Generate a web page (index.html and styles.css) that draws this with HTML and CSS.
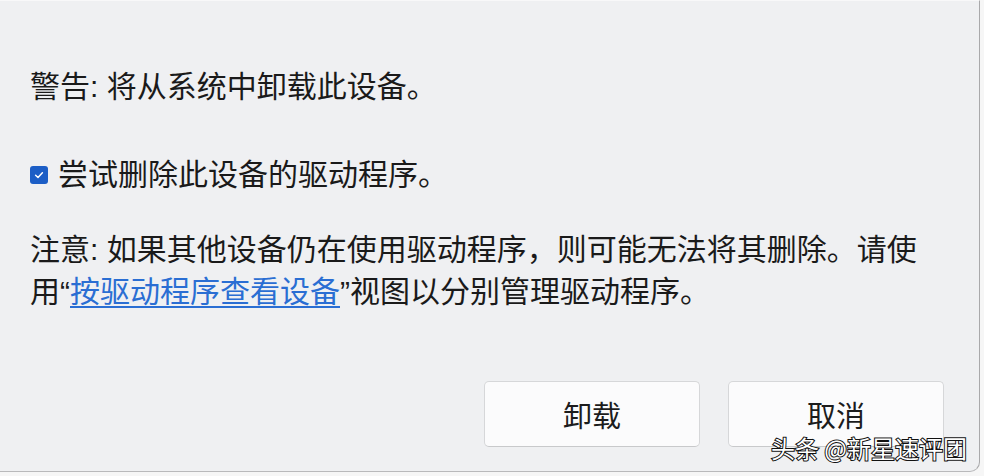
FILE: index.html
```html
<!DOCTYPE html>
<html lang="zh-CN">
<head>
<meta charset="utf-8">
<link rel="stylesheet" href="styles.css">
</head>
<body>
<div class="dialog">
  <p class="warn">警告: 将从系统中卸载此设备。</p>
  <label class="check-row">
    <span class="checkbox">
      <svg width="12" height="12" viewBox="0 0 12 12"><path d="M2.6 6.3 L5 8.5 L9.4 3.8" fill="none" stroke="#fff" stroke-width="1.5" stroke-linecap="round" stroke-linejoin="round"/></svg>
    </span>
    <span>尝试删除此设备的驱动程序。</span>
  </label>
  <p class="note">注意: 如果其他设备仍在使用驱动程序，则可能无法将其删除。请使<br>用“<a class="link" href="#">按驱动程序查看设备</a>”视图以分别管理驱动程序。</p>
  <div class="actions">
    <button class="btn">卸载</button>
    <button class="btn">取消</button>
  </div>
  <div class="watermark">头条 @新星速评团</div>
</div>
</body>
</html>
```

FILE: styles.css
```css
html, body {
  margin: 0;
  padding: 0;
}
body {
  width: 984px;
  height: 476px;
  background: #f6f6f6;
  overflow: hidden;
  font-family: "Liberation Sans", "Noto Sans CJK SC", sans-serif;
  color: #1a1a1a;
}
.dialog {
  position: relative;
  box-sizing: border-box;
  width: 980px;
  height: 472px;
  background: #eff0f2;
  border-right: 1px solid #a9a9ab;
  border-bottom: 1px solid #b9b9bb;
  border-top: 1px solid #f8f8f9;
  border-bottom-right-radius: 10px;
  padding: 65px 35px 0 30px;
  font-size: 30px;
}
.warn {
  margin: 0;
  line-height: 42px;
}
.check-row {
  display: flex;
  align-items: center;
  gap: 10px;
  margin-top: 46px;
  line-height: 42px;
}
.checkbox {
  width: 18px;
  height: 18px;
  border-radius: 3px;
  background: #1c5ec6;
  display: flex;
  align-items: center;
  justify-content: center;
}
.note {
  margin: 33px 0 0;
  line-height: 42px;
}
.link {
  color: #2a6ed3;
  text-decoration: underline;
  text-decoration-thickness: 2px;
  text-underline-offset: 4px;
}
.actions {
  display: flex;
  justify-content: flex-end;
  gap: 28px;
  margin-top: 68px;
}
.btn {
  width: 216px;
  height: 66px;
  background: #fbfbfc;
  border: 1px solid #d6d7d9;
  border-bottom-color: #c8c9cb;
  border-radius: 5px;
  font-family: "Noto Sans CJK SC", sans-serif;
  font-size: 29px;
  color: #1c1c1c;
  padding: 0;
}
.watermark {
  position: absolute;
  right: 12px;
  bottom: 6px;
  font-family: "Noto Sans CJK SC", sans-serif;
  font-size: 24px;
  color: #fff;
  -webkit-text-stroke: 2px #111;
  paint-order: stroke fill;
}
```
